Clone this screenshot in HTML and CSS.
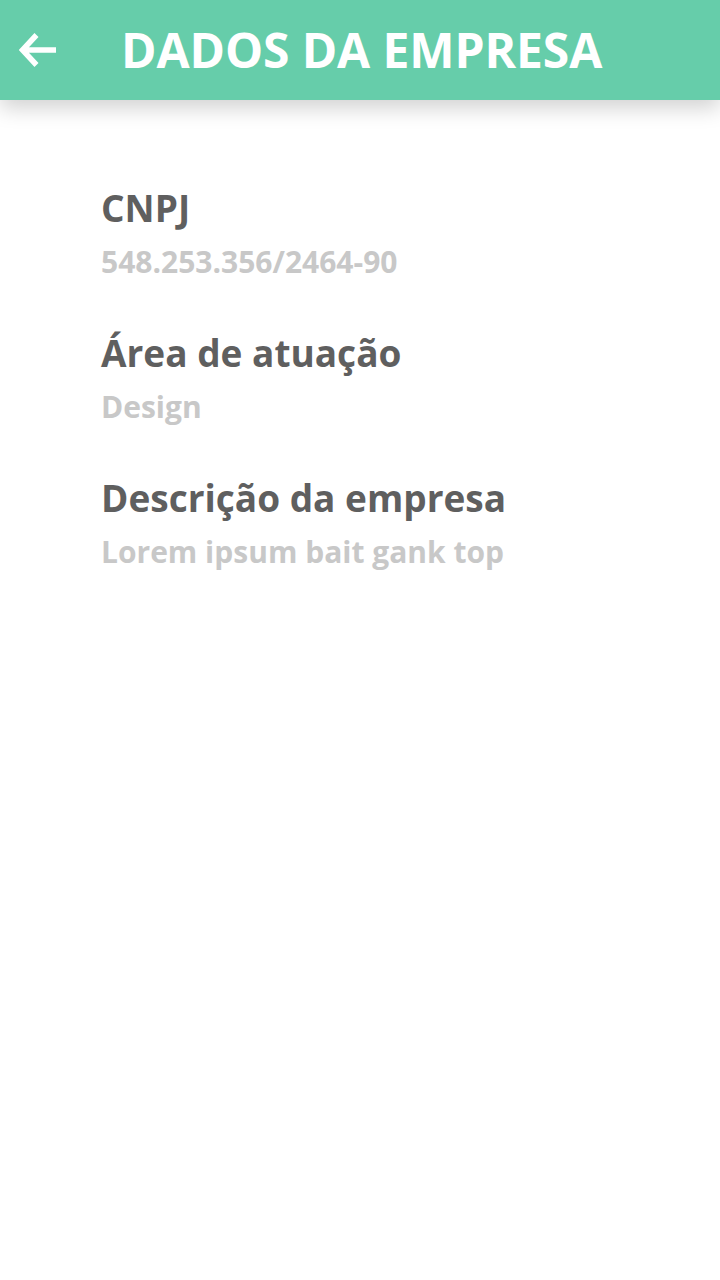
FILE: index.html
```html
<!DOCTYPE html>
<html lang="pt">
<head>
<meta charset="utf-8">
<link rel="stylesheet" href="styles.css">
</head>
<body>
<header class="appbar">
  <button class="back" aria-label="Voltar">
    <svg width="38" height="34" viewBox="0 0 38 34"><path d="M17.5 2 L3.5 17 L17.5 32 M3.5 17 H37" fill="none" stroke="#fff" stroke-width="5.5"/></svg>
  </button>
  <h1 class="title">DADOS DA EMPRESA</h1>
</header>
<main class="content">
  <section class="field">
    <h2 class="label">CNPJ</h2>
    <p class="value">548.253.356/2464-90</p>
  </section>
  <section class="field">
    <h2 class="label">Área de atuação</h2>
    <p class="value">Design</p>
  </section>
  <section class="field">
    <h2 class="label">Descrição da empresa</h2>
    <p class="value">Lorem ipsum bait gank top</p>
  </section>
</main>
</body>
</html>
```
FILE: styles.css
```css
* { box-sizing: border-box; }
html, body { margin: 0; padding: 0; background: #fff; }
body { font-family: "Open Sans", "Noto Sans", sans-serif; width: 720px; height: 1280px; overflow: hidden; }
.appbar {
  height: 100px;
  background: #66cdaa;
  display: flex;
  align-items: center;
  box-shadow: 0 8px 20px rgba(0,0,0,0.18);
  position: relative;
}
.back {
  background: none; border: 0; padding: 0;
  width: 38px; height: 34px;
  margin-left: 19px;
  display: flex;
}
.title {
  margin: 0 0 0 64px;
  color: #fff;
  font-size: 48px;
  font-weight: 700;
  letter-spacing: -0.1px;
  line-height: 1;
}
.content {
  padding: 86px 0 0 101px;
  display: flex;
  flex-direction: column;
  gap: 49px;
}
.field { display: flex; flex-direction: column; gap: 12px; }
.label {
  margin: 0;
  font-size: 37px;
  font-weight: 700;
  color: #5f5f5f;
  line-height: 44px;
}
.value {
  margin: 0;
  font-size: 30px;
  font-weight: 700;
  color: #c8c8c8;
  line-height: 40px;
}
```
